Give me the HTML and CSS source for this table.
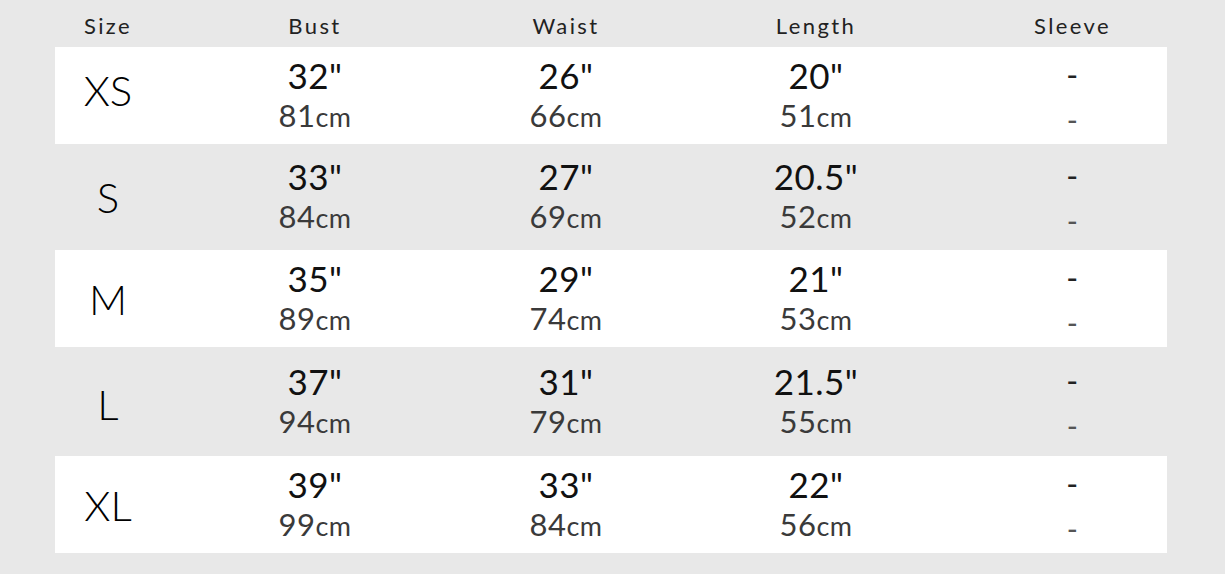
FILE: index.html
```html
<!DOCTYPE html>
<html lang="en">
<head>
<meta charset="utf-8">
<title>Size chart</title>
<link rel="stylesheet" href="styles.css">
</head>
<body>
<div class="chart">
  <div class="row head">
    <div class="cell">Size</div>
    <div class="cell">Bust</div>
    <div class="cell">Waist</div>
    <div class="cell">Length</div>
    <div class="cell sleeve">Sleeve</div>
  </div>

  <div class="row white h97">
    <div class="cell label raise">XS</div>
    <div class="cell val"><span class="in">32"</span><span class="cmline">81<span class="cm">cm</span></span></div>
    <div class="cell val"><span class="in">26"</span><span class="cmline">66<span class="cm">cm</span></span></div>
    <div class="cell val"><span class="in">20"</span><span class="cmline">51<span class="cm">cm</span></span></div>
    <div class="cell val sleeve"><span class="in dash">-</span><span class="cmline dash">-</span></div>
  </div>

  <div class="row grey h106">
    <div class="cell label">S</div>
    <div class="cell val"><span class="in">33"</span><span class="cmline">84<span class="cm">cm</span></span></div>
    <div class="cell val"><span class="in">27"</span><span class="cmline">69<span class="cm">cm</span></span></div>
    <div class="cell val"><span class="in">20.5"</span><span class="cmline">52<span class="cm">cm</span></span></div>
    <div class="cell val sleeve"><span class="in dash">-</span><span class="cmline dash">-</span></div>
  </div>

  <div class="row white h97">
    <div class="cell label">M</div>
    <div class="cell val"><span class="in">35"</span><span class="cmline">89<span class="cm">cm</span></span></div>
    <div class="cell val"><span class="in">29"</span><span class="cmline">74<span class="cm">cm</span></span></div>
    <div class="cell val"><span class="in">21"</span><span class="cmline">53<span class="cm">cm</span></span></div>
    <div class="cell val sleeve"><span class="in dash">-</span><span class="cmline dash">-</span></div>
  </div>

  <div class="row grey h109">
    <div class="cell label lower">L</div>
    <div class="cell val"><span class="in">37"</span><span class="cmline">94<span class="cm">cm</span></span></div>
    <div class="cell val"><span class="in">31"</span><span class="cmline">79<span class="cm">cm</span></span></div>
    <div class="cell val"><span class="in">21.5"</span><span class="cmline">55<span class="cm">cm</span></span></div>
    <div class="cell val sleeve"><span class="in dash">-</span><span class="cmline dash">-</span></div>
  </div>

  <div class="row white h97">
    <div class="cell label">XL</div>
    <div class="cell val"><span class="in">39"</span><span class="cmline">99<span class="cm">cm</span></span></div>
    <div class="cell val"><span class="in">33"</span><span class="cmline">84<span class="cm">cm</span></span></div>
    <div class="cell val"><span class="in">22"</span><span class="cmline">56<span class="cm">cm</span></span></div>
    <div class="cell val sleeve"><span class="in dash">-</span><span class="cmline dash">-</span></div>
  </div>
</div>
</body>
</html>
```

FILE: styles.css
```css
html, body {
  margin: 0;
  padding: 0;
  background: #e8e8e8;
}

body {
  font-family: "Lato", "DejaVu Sans", sans-serif;
  color: #111;
  width: 1225px;
  height: 574px;
  overflow: hidden;
}

.chart {
  margin-left: 55px;
  width: 1112px;
}

.row {
  display: grid;
  grid-template-columns: 106px 308px 194px 306px 198px;
  align-items: center;
  justify-items: center;
}

.white { background: #ffffff; }
.grey { background: #e8e8e8; }

.h97 { height: 97px; }
.h106 { height: 106px; }
.h109 { height: 109px; }

.head {
  height: 47px;
}

.head .cell {
  font-size: 22px;
  letter-spacing: 2.4px;
  color: #222;
  padding-top: 3px;
}

.sleeve {
  padding-left: 9px;
}

.label {
  font-size: 42px;
  font-weight: 300;
  color: #000;
}

.label.raise {
  padding-bottom: 12px;
}

.label.lower {
  padding-top: 5px;
}

.val {
  display: flex;
  flex-direction: column;
  align-items: center;
}

.in {
  font-size: 35px;
  line-height: 38px;
  color: #111;
  letter-spacing: 0.5px;
}

.cmline {
  font-size: 31px;
  line-height: 42px;
  color: #3a3a3a;
  letter-spacing: 0.5px;
}

.cm {
  font-size: 27px;
  line-height: 1;
}

.dash {
  font-size: 32px;
  color: #222;
}

.cmline.dash {
  font-size: 30px;
  color: #555;
  padding-top: 4px;
  margin-bottom: -4px;
}
```
